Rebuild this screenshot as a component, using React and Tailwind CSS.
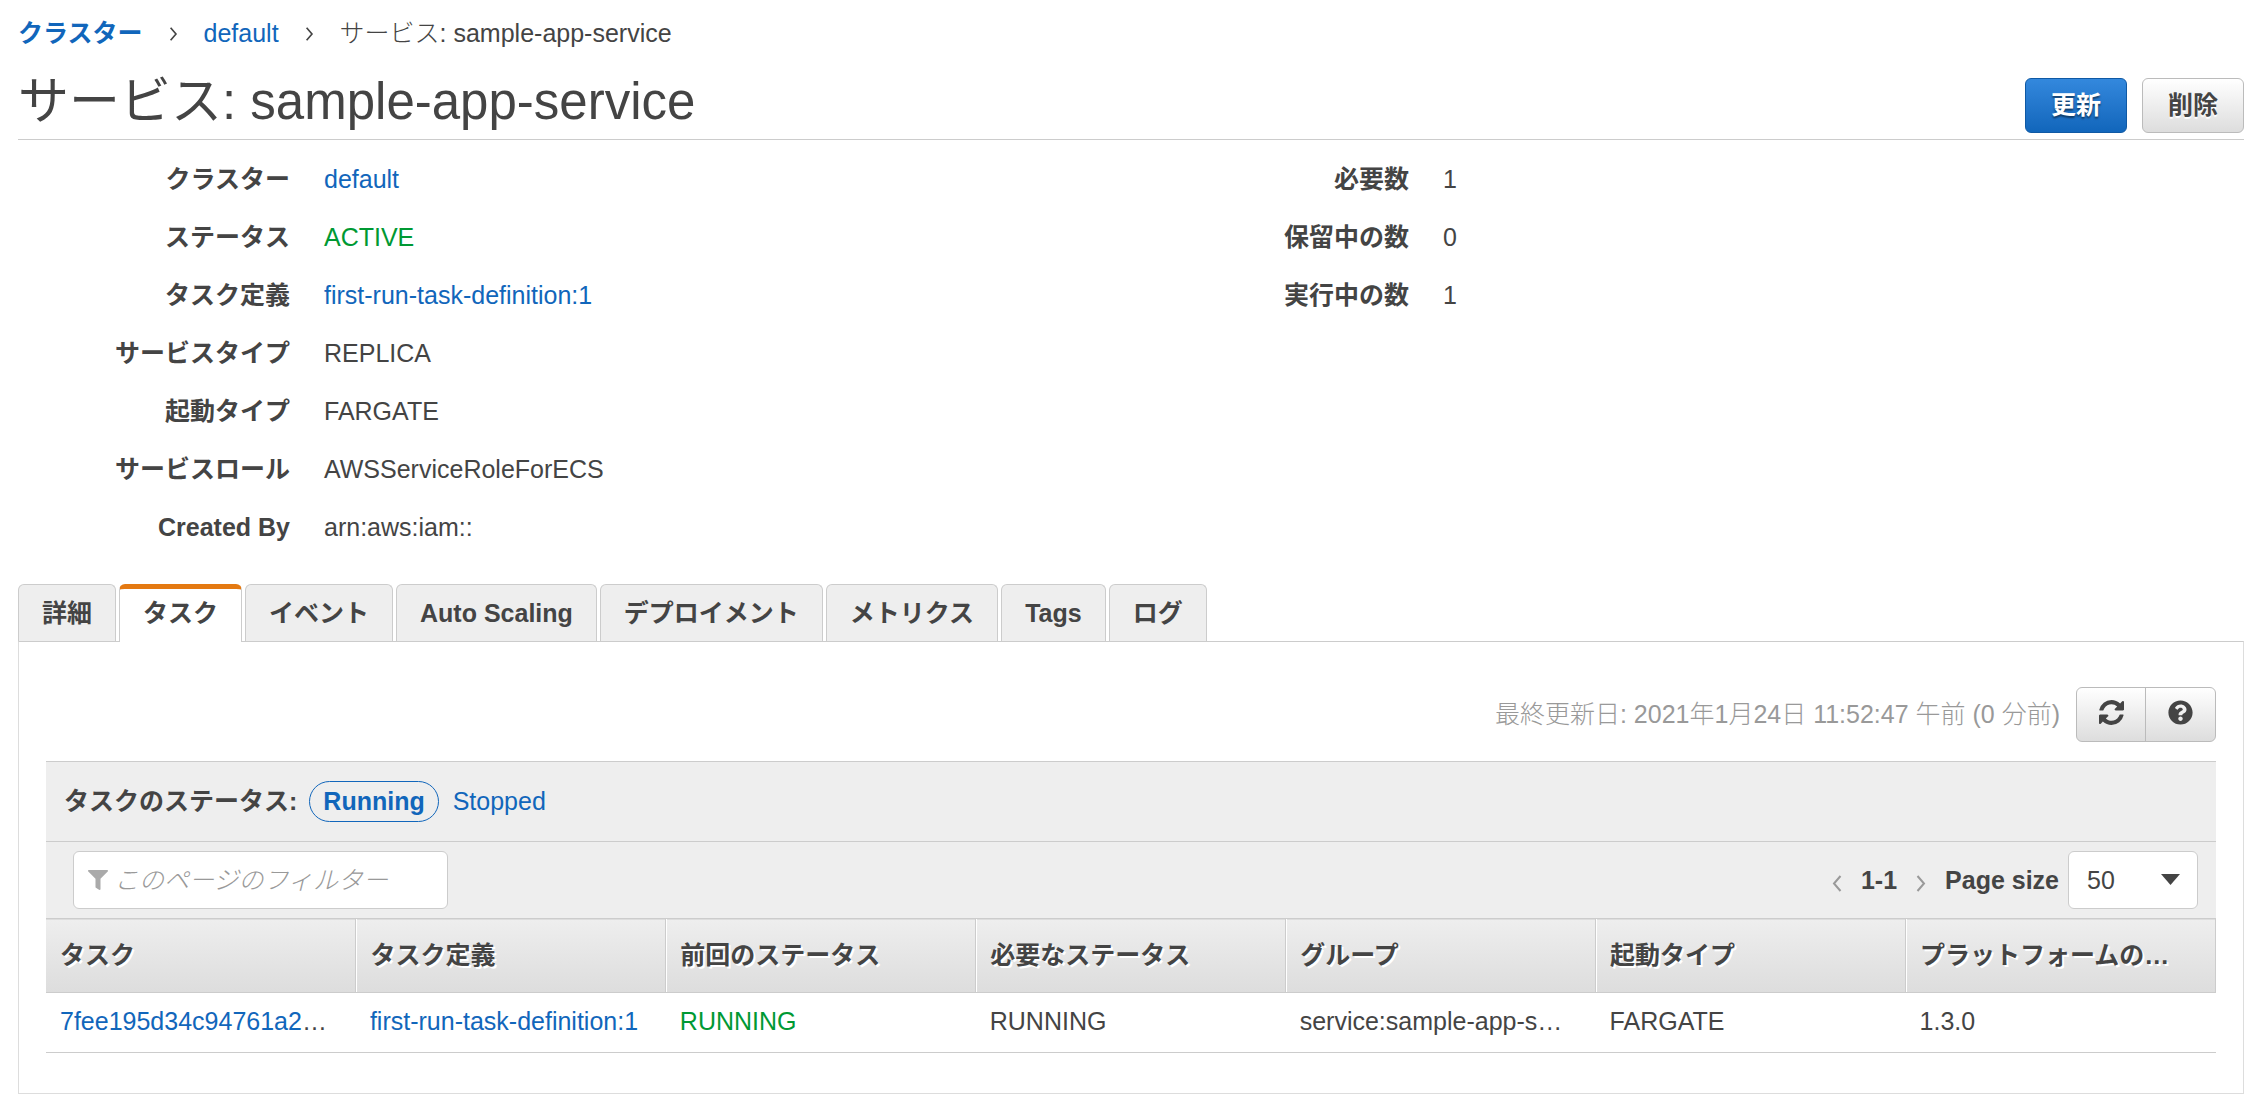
import React from "react";
import { FaFilter, FaQuestionCircle } from "react-icons/fa";

const details = [
  { label: "クラスター", value: "default", type: "link" },
  { label: "ステータス", value: "ACTIVE", type: "ok" },
  { label: "タスク定義", value: "first-run-task-definition:1", type: "link" },
  { label: "サービスタイプ", value: "REPLICA" },
  { label: "起動タイプ", value: "FARGATE" },
  { label: "サービスロール", value: "AWSServiceRoleForECS" },
  { label: "Created By", value: "arn:aws:iam::" },
];

const counts = [
  { label: "必要数", value: "1" },
  { label: "保留中の数", value: "0" },
  { label: "実行中の数", value: "1" },
];

const tabs = [
  "詳細",
  "タスク",
  "イベント",
  "Auto Scaling",
  "デプロイメント",
  "メトリクス",
  "Tags",
  "ログ",
];

const columns = [
  "タスク",
  "タスク定義",
  "前回のステータス",
  "必要なステータス",
  "グループ",
  "起動タイプ",
  "プラットフォームの…",
];

const tasks = [
  {
    id: "7fee195d34c94761a2",
    definition: "first-run-task-definition:1",
    last: "RUNNING",
    desired: "RUNNING",
    group: "service:sample-app-s…",
    launch: "FARGATE",
    platform: "1.3.0",
  },
];

const Chevron = ({ left = false, className }) => (
  <svg className={className} width="10" height="17" viewBox="0 0 10 17" fill="none">
    <path
      d={left ? "M8.5 1 2 8.5 8.5 16" : "M1.5 1 8 8.5 1.5 16"}
      stroke="currentColor"
      strokeWidth="2"
    />
  </svg>
);

const RefreshIcon = () => (
  <svg width="25" height="25" viewBox="0 0 1536 1536" fill="currentColor">
    <path d="M1511 928q0 5-1 7-64 268-268 434.500T764 1536q-146 0-282.500-55T238 1324l-129 129q-19 19-45 19t-45-19-19-45V960q0-26 19-45t45-19h448q26 0 45 19t19 45-19 45l-137 137q71 66 161 102t187 36q134 0 250-65t186-179q11-17 53-117 8-23 30-23h192q13 0 22.500 9.500T1511 928zm25-800v448q0 26-19 45t-45 19h-448q-26 0-45-19t-19-45 19-45l138-138Q969 256 768 256q-134 0-250 65T332 500q-11 17-53 117-8 23-30 23H50q-13 0-22.500-9.500T18 608v-7q65-268 270-434.500T768 0q146 0 284 55.500T1297 212l130-129q19-19 45-19t45 19 19 45z" />
  </svg>
);

const DetailList = ({ items }) => (
  <dl>
    {items.map((item) => (
      <div key={item.label} className="flex gap-[34px] pt-[13px] pb-[12px] leading-[33px]">
        <dt className="w-[272px] shrink-0 text-right font-bold">{item.label}</dt>
        <dd>
          {item.type === "link" ? (
            <a href="#" className="text-[#1166bb]">
              {item.value}
            </a>
          ) : (
            <span className={item.type === "ok" ? "text-[#009933]" : ""}>{item.value}</span>
          )}
        </dd>
      </div>
    ))}
  </dl>
);

const App = () => {
  return (
    <div
      lang="ja"
      className="bg-white pl-[18px] pr-3 pb-3 text-[25px] leading-[33px] text-[#444] font-['Liberation_Sans','Noto_Sans_CJK_JP',sans-serif]"
    >
      <nav className="flex items-center pt-[17px]">
        <a href="#" className="font-bold text-[#1166bb]">
          クラスター
        </a>
        <Chevron className="mx-[26px] h-[14px] w-[9px]" />
        <a href="#" className="text-[#1166bb]">
          default
        </a>
        <Chevron className="mx-[26px] h-[14px] w-[9px]" />
        <span className="font-light">サービス: sample-app-service</span>
      </nav>

      <header className="flex items-end justify-between border-b border-[#ccc] pt-[21px] pb-[6px]">
        <h1 className="text-[51px] leading-[62px] font-normal">サービス: sample-app-service</h1>
        <div className="flex gap-[15px] font-bold">
          <button className="h-[55px] rounded-md border border-[#0f59a4] bg-linear-to-b from-[#3388dd] to-[#1166bb] px-[25px] text-white [text-shadow:0_2px_2px_#00000080]">
            更新
          </button>
          <button className="h-[55px] rounded-md border border-[#bbb] bg-linear-to-b from-white to-[#ddd] px-[25px] [text-shadow:0_2px_1px_#fff]">
            削除
          </button>
        </div>
      </header>

      <section className="grid grid-cols-2 gap-3 pt-[10px] pb-7">
        <DetailList items={details} />
        <DetailList items={counts} />
      </section>

      <div role="tablist" className="flex items-end gap-[3px] font-bold">
        {tabs.map((tab) =>
          tab === "タスク" ? (
            <button
              key={tab}
              role="tab"
              aria-selected="true"
              className="-mb-px h-[58px] rounded-t-md border-x border-t-[5px] border-x-[#ccc] border-t-[#e47911] bg-white px-[23px] pb-1"
            >
              {tab}
            </button>
          ) : (
            <button
              key={tab}
              role="tab"
              aria-selected="false"
              className="h-[57px] rounded-t-md border border-b-0 border-[#ccc] bg-[#eee] px-[23px]"
            >
              {tab}
            </button>
          )
        )}
      </div>

      <main className="border border-[#ddd] border-t-[#ccc] px-[27px] pt-[45px] pb-10">
        <div className="flex items-center justify-end gap-4">
          <p className="font-light text-[#999]">最終更新日: 2021年1月24日 11:52:47 午前 (0 分前)</p>
          <div className="flex h-[55px] divide-x divide-[#bbb] rounded-md border border-[#bbb] bg-linear-to-b from-white to-[#ddd]">
            <button aria-label="更新する" className="flex w-[69px] items-center justify-center pb-1">
              <RefreshIcon />
            </button>
            <button aria-label="ヘルプ" className="flex w-[69px] items-center justify-center pb-1">
              <FaQuestionCircle className="size-[25px]" />
            </button>
          </div>
        </div>

        <div className="mt-[19px] flex h-[80px] items-center border-t border-[#ccc] bg-[#eee] pb-px pl-[18px]">
          <span className="font-bold">タスクのステータス:</span>
          <button className="ml-3 h-[41px] rounded-full border border-[#1166bb] px-[13px] font-bold text-[#1166bb]">
            Running
          </button>
          <button className="ml-[14px] text-[#1166bb]">Stopped</button>
        </div>

        <div className="flex h-[77px] items-center justify-between border-t border-[#ccc] bg-[#eee] pl-[27px] pr-[18px]">
          <label className="flex h-[58px] w-[375px] items-center gap-[6px] rounded-md border border-[#ccc] bg-white pl-[14px]">
            <FaFilter className="size-5 shrink-0 text-[#aaa]" />
            <input
              type="text"
              aria-label="フィルター"
              placeholder="このページのフィルター"
              className="min-w-0 flex-1 outline-none placeholder:font-light placeholder:text-[#999] placeholder:italic"
            />
          </label>
          <div className="flex items-center font-bold">
            <button aria-label="前へ" className="pt-[6px] text-[#999]">
              <Chevron left />
            </button>
            <span className="mx-[19px]">1-1</span>
            <button aria-label="次へ" className="pt-[6px] text-[#999]">
              <Chevron />
            </button>
            <label htmlFor="page-size" className="ml-[19px]">
              Page size
            </label>
            <div className="relative ml-[9px]">
              <select
                id="page-size"
                defaultValue="50"
                className="h-[58px] w-[130px] appearance-none rounded-md border border-[#ccc] bg-white pl-[18px] font-normal"
              >
                <option>10</option>
                <option>25</option>
                <option>50</option>
              </select>
              <svg
                className="pointer-events-none absolute top-[23px] right-[18px]"
                width="19"
                height="11"
                viewBox="0 0 19 11"
                fill="currentColor"
              >
                <path d="M0 0h19L9.500 11z" />
              </svg>
            </div>
          </div>
        </div>

        <table className="w-full table-fixed border-collapse text-left">
          <thead>
            <tr className="h-[74px] border-y border-[#ccc] bg-linear-to-b from-[#eee] to-[#ddd]">
              {columns.map((col) => (
                <th
                  key={col}
                  className="whitespace-nowrap border-r border-[#ccc] px-[14px] font-bold shadow-[inset_1px_0_0_#fff] [text-shadow:2px_2px_0_#fff] first:shadow-none"
                >
                  {col}
                </th>
              ))}
            </tr>
          </thead>
          <tbody>
            {tasks.map((task) => (
              <tr key={task.id} className="h-[60px] border-b border-[#ccc] [&>td]:whitespace-nowrap [&>td]:px-[14px] [&>td]:pb-[2px]">
                <td>
                  <a href="#" className="text-[#1166bb]">
                    {task.id}
                  </a>
                  …
                </td>
                <td>
                  <a href="#" className="text-[#1166bb]">
                    {task.definition}
                  </a>
                </td>
                <td className="text-[#009933]">{task.last}</td>
                <td>{task.desired}</td>
                <td>{task.group}</td>
                <td>{task.launch}</td>
                <td>{task.platform}</td>
              </tr>
            ))}
          </tbody>
        </table>
      </main>
    </div>
  );
};

export default App;
